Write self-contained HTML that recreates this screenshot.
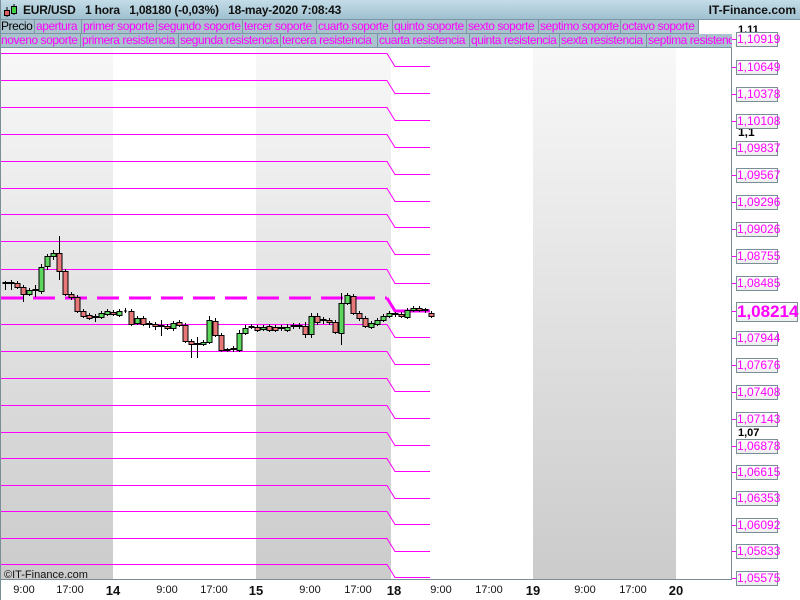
<!DOCTYPE html>
<html><head><meta charset="utf-8"><style>
*{margin:0;padding:0;box-sizing:border-box}
body{width:800px;height:600px;overflow:hidden;background:#fff;font-family:"Liberation Sans",sans-serif;position:relative}
.hdr{position:absolute;left:0;top:0;width:800px;height:20px;background:linear-gradient(#c4dde8,#9fc0cf);border-bottom:1px solid #7a96a4}
.hdr .t{position:absolute;left:23px;top:3px;font-size:12px;font-weight:bold;color:#111;white-space:pre;letter-spacing:-0.2px}
.hdr .r{position:absolute;right:4px;top:3px;font-size:12px;font-weight:bold;color:#111}
.row{position:absolute;left:0;height:14px;display:flex;white-space:nowrap;overflow:hidden}
.row span{display:block;height:14px;line-height:13px;font-size:12px;letter-spacing:-0.45px;color:#f0f;background:#a9c2ce;border-right:1px solid #7a96a4;border-bottom:1px solid #7a96a4;padding:0 0 0 1px;flex:none;overflow:hidden}
.row span.b{color:#000}
.lab{position:absolute;left:736px;width:42px;height:15px;border:1px solid #7a8e98;background:linear-gradient(#fff,#eee);color:#f0f;font-size:12px;line-height:13px;text-align:center}
.tk{position:absolute;left:732px;width:4px;height:1px;background:#f0f}
.ax{position:absolute;top:584px;font-size:11px;color:#111;transform:translateX(-50%)}
.ax.b{font-weight:bold;font-size:13px;top:583px}
</style></head><body>
<div class="hdr">
<svg style="position:absolute;left:3px;top:3px" width="16" height="15"><line x1="4" y1="4" x2="4" y2="14" stroke="#000"/><rect x="1.5" y="7.5" width="5" height="5" fill="#e06060" stroke="#000"/><line x1="11" y1="1" x2="11" y2="12" stroke="#000"/><rect x="8.5" y="3.5" width="5" height="7" fill="#40d040" stroke="#000"/></svg>
<div class="t">EUR/USD   1 hora   1,08180 (-0,03%)   18-may-2020 7:08:43</div>
<div class="r">IT-Finance.com</div>
</div>
<div class="row" style="top:20px;width:700px"><span class="b" style="width:35px">Precio</span><span style="width:47px">apertura</span><span style="width:75px">primer soporte</span><span style="width:86px">segundo soporte</span><span style="width:74px">tercer soporte</span><span style="width:76px">cuarto soporte</span><span style="width:74px">quinto soporte</span><span style="width:72px">sexto soporte</span><span style="width:82px">septimo soporte</span><span style="width:78px">octavo soporte</span></div>
<div class="row" style="top:34px;width:732px"><span style="width:81px">noveno soporte</span><span style="width:98px">primera resistencia</span><span style="width:102px">segunda resistencia</span><span style="width:97px">tercera resistencia</span><span style="width:92px">cuarta resistencia</span><span style="width:90px">quinta resistencia</span><span style="width:87px">sexta resistencia</span><span style="width:90px">septima resistencia</span></div>

<svg style="position:absolute;left:0;top:48px" width="732" height="533">
<defs><linearGradient id="g" x1="0" y1="0" x2="0" y2="1"><stop offset="0" stop-color="#f8f8f8"/><stop offset="1" stop-color="#cbcbcb"/></linearGradient></defs>
<rect x="1" y="0" width="112" height="531" fill="url(#g)"/>
<rect x="256" y="0" width="135" height="531" fill="url(#g)"/>
<rect x="533" y="0" width="143" height="531" fill="url(#g)"/>
<line x1="0.5" y1="0" x2="0.5" y2="532" stroke="#7a8e98"/>
<line x1="731.5" y1="-30" x2="731.5" y2="532" stroke="#7a8e98"/>
<line x1="0" y1="531.5" x2="732" y2="531.5" stroke="#7a8e98"/>
<g fill="none" stroke="#f0f" stroke-width="1">
<polyline points="1,5.5 387,5.5 395,18.5 430,18.5"/>
<polyline points="1,32.5 387,32.5 395,45.5 430,45.5"/>
<polyline points="1,59.5 387,59.5 395,72.5 430,72.5"/>
<polyline points="1,86.5 387,86.5 395,99.5 430,99.5"/>
<polyline points="1,113.5 387,113.5 395,126.5 430,126.5"/>
<polyline points="1,140.5 387,140.5 395,153.5 430,153.5"/>
<polyline points="1,166.5 387,166.5 395,179.5 430,179.5"/>
<polyline points="1,193.5 387,193.5 395,206.5 430,206.5"/>
<polyline points="1,221.5 387,221.5 395,235.5 430,235.5"/>
<polyline points="1,276.5 387,276.5 395,289.5 430,289.5"/>
<polyline points="1,303.5 387,303.5 395,316.5 430,316.5"/>
<polyline points="1,330.5 387,330.5 395,343.5 430,343.5"/>
<polyline points="1,357.5 387,357.5 395,370.5 430,370.5"/>
<polyline points="1,384.5 387,384.5 395,397.5 430,397.5"/>
<polyline points="1,410.5 387,410.5 395,423.5 430,423.5"/>
<polyline points="1,437.5 387,437.5 395,450.5 430,450.5"/>
<polyline points="1,463.5 387,463.5 395,476.5 430,476.5"/>
<polyline points="1,490.5 387,490.5 395,503.5 430,503.5"/>
<polyline points="1,516.5 387,516.5 395,529.5 430,529.5"/>
</g>
<line x1="1" y1="250" x2="387" y2="250" stroke="#f0f" stroke-width="3" stroke-dasharray="22,10"/>
<polyline points="387,250 395,263 430,263" fill="none" stroke="#f0f" stroke-width="3"/>
<g stroke="#000" stroke-width="1" transform="translate(0,-48)">
<path d="M5.5 281v9M11.5 280v10M17.5 281v8M23.5 285v17M29.5 288v8M35.5 285v12M41.5 264v30M47.5 254v16M53.5 250v10M59.5 236v44M65.5 269v27M71.5 292v8M77.5 295v18M83.5 309v9M89.5 313v7M95.5 314v8M101.5 311v8M107.5 309v7M113.5 310v6M119.5 309v8M125.5 308v5M131.5 309v17M137.5 316v9M143.5 316v10M149.5 321v7M155.5 322v8M161.5 320v16M167.5 324v6M173.5 321v10M179.5 320v7M185.5 323v20M191.5 339v19M197.5 337v21M203.5 340v6M209.5 316v28M215.5 318v19M221.5 333v19M227.5 348v4M233.5 346v6M239.5 330v22M245.5 325v10M251.5 324v5M257.5 325v7M263.5 325v6M269.5 324v8M275.5 325v7M281.5 325v6M287.5 324v8M293.5 323v6M299.5 323v6M305.5 322v16M311.5 313v25M317.5 313v12M323.5 317v7M329.5 318v7M335.5 320v14M341.5 293v52M347.5 293v12M353.5 294v21M359.5 311v10M365.5 316v12M371.5 321v8M377.5 318v8M383.5 314v8M389.5 311v7M395.5 312v5M401.5 312v6M407.5 308v11M413.5 306v6M419.5 306v6M425.5 308v5M431.5 311v7"/>
</g>
<g stroke="#000" stroke-width="1" transform="translate(0,-48)">
<g fill="#222"><rect x="3" y="282.5" width="5" height="1"/><rect x="9" y="282.5" width="5" height="1"/><rect x="33" y="289.5" width="5" height="1"/><rect x="93" y="316.5" width="5" height="1"/><rect x="125" y="310.5" width="1" height="1"/><rect x="147" y="323.5" width="5" height="1"/><rect x="159" y="325.5" width="5" height="1"/><rect x="195" y="343.5" width="5" height="1"/><rect x="225" y="349.5" width="5" height="1"/><rect x="231" y="348.5" width="5" height="1"/><rect x="249" y="326.5" width="5" height="1"/><rect x="279" y="327.5" width="5" height="1"/><rect x="291" y="325.5" width="5" height="1"/><rect x="297" y="325.5" width="5" height="1"/><rect x="321" y="319.5" width="5" height="1"/><rect x="393" y="313.5" width="5" height="1"/><rect x="423" y="309.5" width="5" height="1"/></g>
<g fill="#e87878"><rect x="15" y="283.5" width="5" height="4"/><rect x="21" y="287.5" width="5" height="7"/><rect x="57" y="253.5" width="5" height="18"/><rect x="63" y="271.5" width="5" height="23"/><rect x="69" y="294.5" width="5" height="3"/><rect x="75" y="297.5" width="5" height="14"/><rect x="81" y="311.5" width="5" height="5"/><rect x="87" y="315.5" width="5" height="3"/><rect x="111" y="312.5" width="5" height="2"/><rect x="129" y="311.5" width="5" height="13"/><rect x="141" y="318.5" width="5" height="6"/><rect x="153" y="324.5" width="5" height="2"/><rect x="165" y="326.5" width="5" height="2"/><rect x="177" y="322.5" width="5" height="3"/><rect x="183" y="325.5" width="5" height="16"/><rect x="189" y="341.5" width="5" height="3"/><rect x="213" y="321.5" width="5" height="14"/><rect x="219" y="335.5" width="5" height="15"/><rect x="255" y="327.5" width="5" height="3"/><rect x="267" y="326.5" width="5" height="4"/><rect x="273" y="327.5" width="5" height="3"/><rect x="303" y="326.5" width="5" height="8"/><rect x="315" y="316.5" width="5" height="6"/><rect x="327" y="320.5" width="5" height="2"/><rect x="333" y="322.5" width="5" height="10"/><rect x="351" y="296.5" width="5" height="17"/><rect x="357" y="313.5" width="5" height="5"/><rect x="363" y="318.5" width="5" height="8"/><rect x="399" y="314.5" width="5" height="2"/><rect x="417" y="308.5" width="5" height="2"/><rect x="429" y="313.5" width="5" height="3"/></g>
<g fill="#5cd65c"><rect x="27" y="290.5" width="5" height="4"/><rect x="39" y="267.5" width="5" height="24"/><rect x="45" y="256.5" width="5" height="10"/><rect x="51" y="253.5" width="5" height="3"/><rect x="99" y="313.5" width="5" height="4"/><rect x="105" y="311.5" width="5" height="3"/><rect x="117" y="311.5" width="5" height="4"/><rect x="135" y="318.5" width="5" height="5"/><rect x="171" y="323.5" width="5" height="5"/><rect x="201" y="342.5" width="5" height="2"/><rect x="207" y="320.5" width="5" height="22"/><rect x="237" y="333.5" width="5" height="17"/><rect x="243" y="328.5" width="5" height="5"/><rect x="261" y="327.5" width="5" height="2"/><rect x="285" y="327.5" width="5" height="3"/><rect x="309" y="316.5" width="5" height="18"/><rect x="339" y="303.5" width="5" height="30"/><rect x="345" y="295.5" width="5" height="8"/><rect x="369" y="323.5" width="5" height="4"/><rect x="375" y="320.5" width="5" height="4"/><rect x="381" y="316.5" width="5" height="4"/><rect x="387" y="313.5" width="5" height="3"/><rect x="405" y="310.5" width="5" height="7"/><rect x="411" y="308.5" width="5" height="2"/></g>
</g>
<text x="4" y="530" font-size="11" font-family="Liberation Sans" fill="#111">©IT-Finance.com</text>
</svg>

<div style="position:absolute;left:738px;top:24px;font-size:11px;font-weight:bold">1,11</div>
<div style="position:absolute;left:738px;top:125px;font-size:12px;font-weight:bold">1,1</div>
<div style="position:absolute;left:738px;top:427px;font-size:11px;font-weight:bold">1,07</div>

<div class="tk" style="top:39px"></div><div class="lab" style="top:32px">1,10919</div>
<div class="tk" style="top:67px"></div><div class="lab" style="top:60px">1,10649</div>
<div class="tk" style="top:94px"></div><div class="lab" style="top:87px">1,10378</div>
<div class="tk" style="top:121px"></div><div class="lab" style="top:114px">1,10108</div>
<div class="tk" style="top:148px"></div><div class="lab" style="top:141px">1,09837</div>
<div class="tk" style="top:175px"></div><div class="lab" style="top:168px">1,09567</div>
<div class="tk" style="top:202px"></div><div class="lab" style="top:195px">1,09296</div>
<div class="tk" style="top:229px"></div><div class="lab" style="top:222px">1,09026</div>
<div class="tk" style="top:256px"></div><div class="lab" style="top:249px">1,08755</div>
<div class="tk" style="top:283px"></div><div class="lab" style="top:276px">1,08485</div>
<div class="tk" style="top:311px"></div><div class="lab" style="top:302px;width:62px;height:20px;font-size:17px;font-weight:bold;line-height:18px">1,08214</div>
<div class="tk" style="top:338px"></div><div class="lab" style="top:331px">1,07944</div>
<div class="tk" style="top:365px"></div><div class="lab" style="top:358px">1,07676</div>
<div class="tk" style="top:392px"></div><div class="lab" style="top:385px">1,07408</div>
<div class="tk" style="top:419px"></div><div class="lab" style="top:412px">1,07143</div>
<div class="tk" style="top:446px"></div><div class="lab" style="top:439px">1,06878</div>
<div class="tk" style="top:472px"></div><div class="lab" style="top:465px">1,06615</div>
<div class="tk" style="top:498px"></div><div class="lab" style="top:491px">1,06353</div>
<div class="tk" style="top:525px"></div><div class="lab" style="top:518px">1,06092</div>
<div class="tk" style="top:551px"></div><div class="lab" style="top:544px">1,05833</div>
<div class="tk" style="top:578px"></div><div class="lab" style="top:571px">1,05575</div>

<div class="ax" style="left:24px">9:00</div>
<div class="ax" style="left:70px">17:00</div>
<div class="ax b" style="left:113px">14</div>
<div class="ax" style="left:167px">9:00</div>
<div class="ax" style="left:214px">17:00</div>
<div class="ax b" style="left:256px">15</div>
<div class="ax" style="left:310px">9:00</div>
<div class="ax" style="left:358px">17:00</div>
<div class="ax b" style="left:394px">18</div>
<div class="ax" style="left:441px">9:00</div>
<div class="ax" style="left:489px">17:00</div>
<div class="ax b" style="left:533px">19</div>
<div class="ax" style="left:585px">9:00</div>
<div class="ax" style="left:633px">17:00</div>
<div class="ax b" style="left:676px">20</div>
<div style="position:absolute;left:0;top:0;width:1px;height:600px;background:#7a8e98"></div>
</body></html>
